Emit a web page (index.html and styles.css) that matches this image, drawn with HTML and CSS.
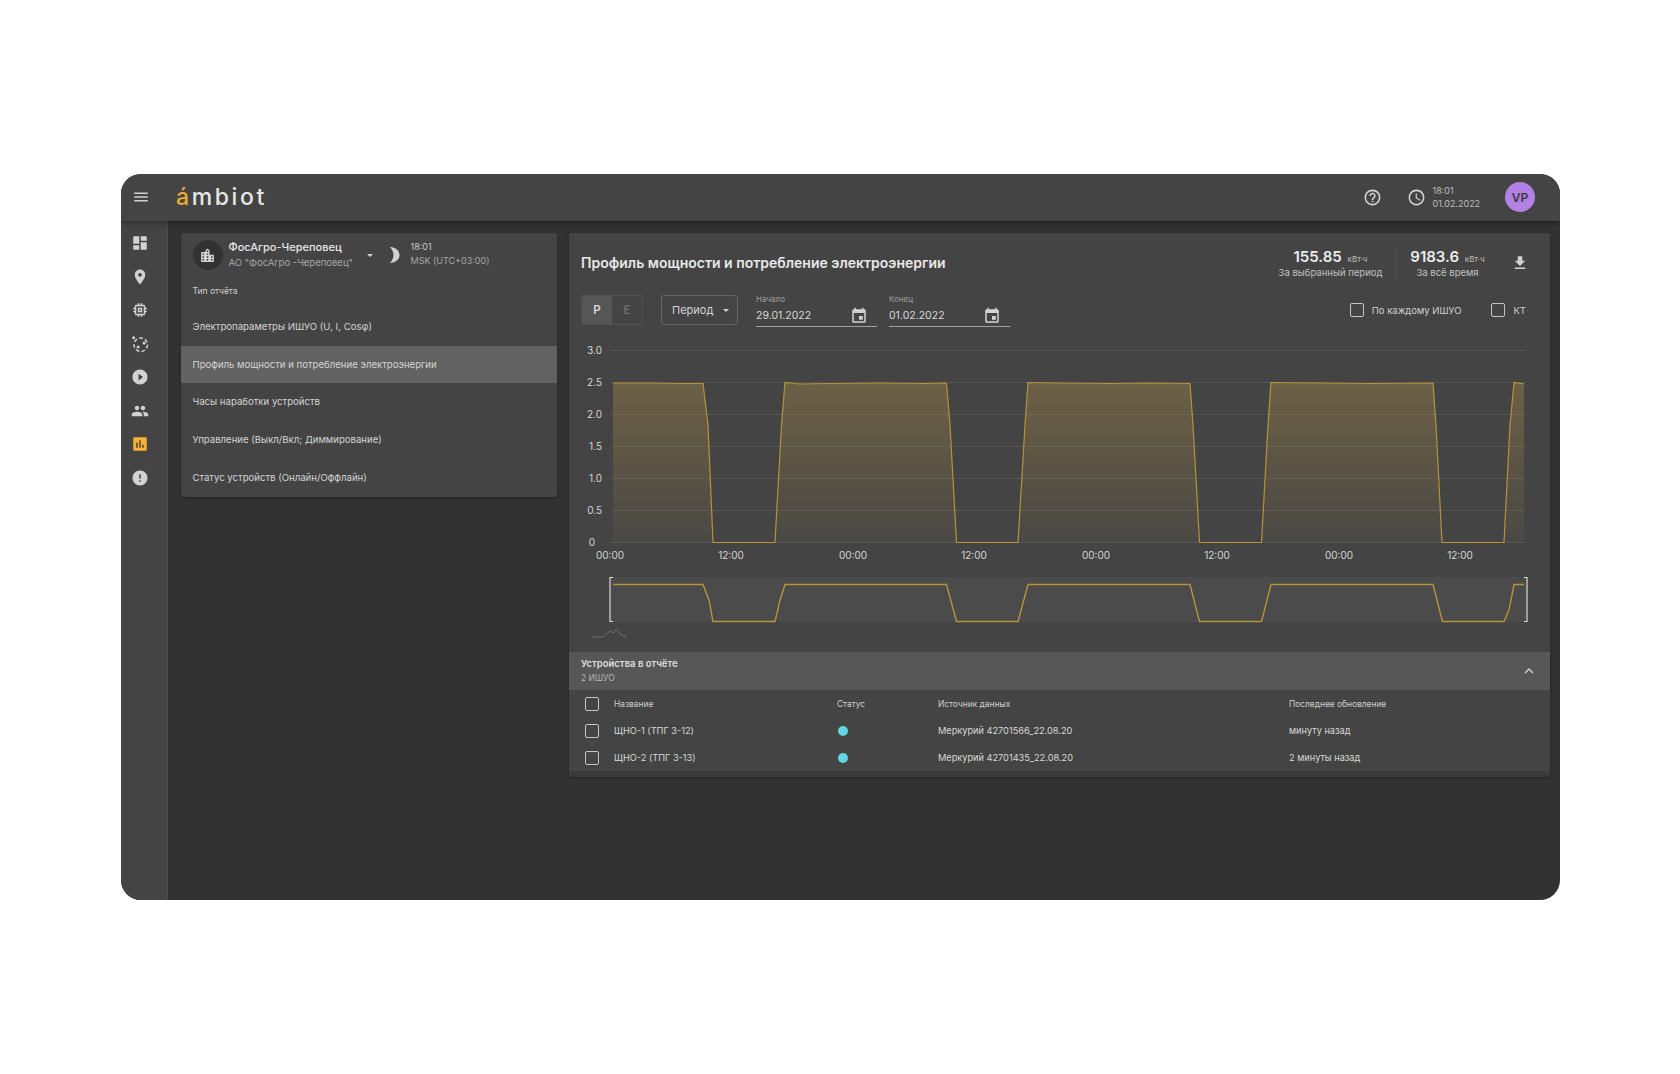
FILE: index.html
```html
<!DOCTYPE html>
<html lang="ru">
<head>
  <meta charset="UTF-8">
  <title>Ambiot</title>
  <link rel="stylesheet" href="styles.css">
</head>
<body>

<div class="window">
  <header class="topbar">
    <svg class="ic ic-menu" viewBox="0 0 24 24"><path d="M3 18h18v-2H3v2zm0-5h18v-2H3v2zm0-7v2h18V6H3z"/></svg>
    <div class="logo"><span class="logo-a">á</span>mbiot</div>
    <div class="topbar-right">
      <svg class="ic ic-help" viewBox="0 0 24 24"><path d="M11 18h2v-2h-2v2zm1-16C6.48 2 2 6.48 2 12s4.48 10 10 10 10-4.48 10-10S17.52 2 12 2zm0 18c-4.41 0-8-3.59-8-8s3.59-8 8-8 8 3.59 8 8-3.59 8-8 8zm0-14c-2.21 0-4 1.79-4 4h2c0-1.1.9-2 2-2s2 .9 2 2c0 2-3 1.75-3 5h2c0-2.25 3-2.5 3-5 0-2.21-1.79-4-4-4z"/></svg>
      <svg class="ic ic-clock" viewBox="0 0 24 24"><path d="M11.99 2C6.47 2 2 6.48 2 12s4.47 10 9.99 10C17.52 22 22 17.52 22 12S17.52 2 11.99 2zM12 20c-4.42 0-8-3.58-8-8s3.58-8 8-8 8 3.58 8 8-3.58 8-8 8zm.5-13H11v6l5.25 3.15.75-1.23-4.5-2.67z"/></svg>
      <div class="clock-text"><div>18:01</div><div>01.02.2022</div></div>
      <div class="avatar">VP</div>
    </div>
  </header>

  <div class="main">
    <nav class="sidebar">
      <svg class="ic nav-ic" viewBox="0 0 24 24"><path d="M3 13h8V3H3v10zm0 8h8v-6H3v6zm10 0h8V11h-8v10zm0-18v6h8V3h-8z"/></svg>
      <svg class="ic nav-ic" viewBox="0 0 24 24"><path d="M12 2C8.13 2 5 5.13 5 9c0 5.25 7 13 7 13s7-7.75 7-13c0-3.87-3.13-7-7-7zm0 9.5a2.5 2.5 0 0 1 0-5 2.5 2.5 0 0 1 0 5z"/></svg>
      <svg class="ic nav-ic" viewBox="0 0 24 24"><path d="M15 9H9v6h6V9zm-2 4h-2v-2h2v2zm8-2V9h-2V7c0-1.1-.9-2-2-2h-2V3h-2v2h-2V3H9v2H7c-1.1 0-2 .9-2 2v2H3v2h2v2H3v2h2v2c0 1.1.9 2 2 2h2v2h2v-2h2v2h2v-2h2c1.1 0 2-.9 2-2v-2h2v-2h-2v-2h2zm-4 6H7V7h10v10z"/></svg>
      <svg class="ic nav-ic" viewBox="0 0 24 24"><circle class="dashed" cx="13" cy="13" r="9"/><circle cx="3.5" cy="3.5" r="2"/><circle cx="17.5" cy="10.5" r="2"/><circle cx="9.5" cy="16" r="2"/></svg>
      <svg class="ic nav-ic" viewBox="0 0 24 24"><path d="M12 2C6.48 2 2 6.48 2 12s4.48 10 10 10 10-4.48 10-10S17.52 2 12 2zm-2 14.5v-9l6 4.5-6 4.5z"/></svg>
      <svg class="ic nav-ic" viewBox="0 0 24 24"><path d="M16 11c1.66 0 2.99-1.34 2.99-3S17.66 5 16 5c-1.66 0-3 1.34-3 3s1.34 3 3 3zm-8 0c1.66 0 2.99-1.34 2.99-3S9.66 5 8 5C6.34 5 5 6.34 5 8s1.34 3 3 3zm0 2c-2.33 0-7 1.17-7 3.5V19h14v-2.5c0-2.33-4.67-3.5-7-3.5zm8 0c-.29 0-.62.02-.97.05 1.16.84 1.97 1.97 1.97 3.45V19h6v-2.5c0-2.33-4.67-3.5-7-3.5z"/></svg>
      <svg class="ic nav-ic nav-active" viewBox="0 0 24 24"><path d="M19 3H5c-1.1 0-2 .9-2 2v14c0 1.1.9 2 2 2h14c1.1 0 2-.9 2-2V5c0-1.1-.9-2-2-2zM9 17H7v-7h2v7zm4 0h-2V7h2v10zm4 0h-2v-4h2v4z"/></svg>
      <svg class="ic nav-ic" viewBox="0 0 24 24"><path d="M12 2C6.48 2 2 6.48 2 12s4.48 10 10 10 10-4.48 10-10S17.52 2 12 2zm1 15h-2v-2h2v2zm0-4h-2V7h2v6z"/></svg>
    </nav>

    <div class="content">
      <section class="card reports">
        <div class="org">
          <div class="org-icon">
            <svg class="ic" viewBox="0 0 24 24"><path d="M15 11V5l-3-3-3 3v2H3v14h18V11h-6zm-8 8H5v-2h2v2zm0-4H5v-2h2v2zm0-4H5V9h2v2zm6 8h-2v-2h2v2zm0-4h-2v-2h2v2zm0-4h-2V9h2v2zm0-4h-2V5h2v2zm6 12h-2v-2h2v2zm0-4h-2v-2h2v2z"/></svg>
          </div>
          <div class="org-names">
            <div class="org-name">ФосАгро-Череповец</div>
            <div class="org-sub">АО "ФосАгро -Череповец"</div>
          </div>
          <span class="caret"></span>
          <svg class="ic ic-moon" viewBox="0 0 24 24"><path d="M5 1c8 1 13 5 13 11s-5 10-13 11c3-3 5-7 5-11S8 4 5 1z"/></svg>
          <div class="org-time">
            <div>18:01</div>
            <div class="org-zone">MSK (UTC+03:00)</div>
          </div>
        </div>
        <div class="reports-label">Тип отчёта</div>
        <ul class="report-list">
          <li>Электропараметры ИШУО (U, I, Cosφ)</li>
          <li class="selected">Профиль мощности и потребление электроэнергии</li>
          <li>Часы наработки устройств</li>
          <li>Управление (Выкл/Вкл; Диммирование)</li>
          <li>Статус устройств (Онлайн/Оффлайн)</li>
        </ul>
      </section>

      <section class="card report">
        <div class="report-head">
          <h2>Профиль мощности и потребление электроэнергии</h2>
          <div class="totals">
            <div class="total total-period">
              <div class="total-value">155.85 <small>кВт·ч</small></div>
              <div class="total-label">За выбранный период</div>
            </div>
            <div class="total total-all">
              <div class="total-value">9183.6 <small>кВт·ч</small></div>
              <div class="total-label">За всё время</div>
            </div>
            <svg class="ic ic-download" viewBox="0 0 24 24"><path d="M19 9h-4V3H9v6H5l7 7 7-7zM5 18v2h14v-2H5z"/></svg>
          </div>
        </div>

        <div class="controls">
          <div class="toggle"><span class="toggle-on">P</span><span class="toggle-off">E</span></div>
          <div class="select">Период <span class="caret"></span></div>
          <div class="date">
            <label>Начало</label>
            <div class="date-value">29.01.2022
              <svg class="ic" viewBox="0 0 24 24"><path d="M17 12h-5v5h5v-5zM16 1v2H8V1H6v2H5c-1.11 0-1.99.9-1.99 2L3 19c0 1.1.89 2 2 2h14c1.1 0 2-.9 2-2V5c0-1.1-.9-2-2-2h-1V1h-2zm3 18H5V8h14v11z"/></svg>
            </div>
          </div>
          <div class="date">
            <label>Конец</label>
            <div class="date-value">01.02.2022
              <svg class="ic" viewBox="0 0 24 24"><path d="M17 12h-5v5h5v-5zM16 1v2H8V1H6v2H5c-1.11 0-1.99.9-1.99 2L3 19c0 1.1.89 2 2 2h14c1.1 0 2-.9 2-2V5c0-1.1-.9-2-2-2h-1V1h-2zm3 18H5V8h14v11z"/></svg>
            </div>
          </div>
          <div class="checks">
            <span class="check-item check-each"><span class="box"></span>По каждому ИШУО</span>
            <span class="check-item"><span class="box"></span>КТ</span>
          </div>
        </div>

        <svg class="chart" viewBox="569 340 981 312">
          <defs>
            <linearGradient id="areaFill" x1="0" y1="0" x2="0" y2="1">
              <stop offset="0" stop-color="#c9a04a" stop-opacity="0.3"/>
              <stop offset="1" stop-color="#c9a04a" stop-opacity="0.05"/>
            </linearGradient>
          </defs>
          <g class="grid">
            <line x1="610" y1="350.5" x2="1526" y2="350.5"/>
            <line x1="610" y1="382.5" x2="1526" y2="382.5"/>
            <line x1="610" y1="414.5" x2="1526" y2="414.5"/>
            <line x1="610" y1="446.5" x2="1526" y2="446.5"/>
            <line x1="610" y1="478.5" x2="1526" y2="478.5"/>
            <line x1="610" y1="510.5" x2="1526" y2="510.5"/>
            <line x1="610" y1="542.5" x2="1526" y2="542.5"/>
          </g>
          <g class="y-labels">
            <text x="602" y="353.5">3.0</text>
            <text x="602" y="385.5">2.5</text>
            <text x="602" y="417.5">2.0</text>
            <text x="602" y="449.5">1.5</text>
            <text x="602" y="481.5">1.0</text>
            <text x="602" y="513.5">0.5</text>
            <text x="595" y="545.5">0</text>
          </g>
          <g class="x-labels">
            <text x="610" y="559">00:00</text>
            <text x="731" y="559">12:00</text>
            <text x="853" y="559">00:00</text>
            <text x="974" y="559">12:00</text>
            <text x="1096" y="559">00:00</text>
            <text x="1217" y="559">12:00</text>
            <text x="1339" y="559">00:00</text>
            <text x="1460" y="559">12:00</text>
          </g>
          <path class="area" d="M613 383L650 383L680 383.5L703 383.5L708 425L713 542.5L775 542.5L781.5 425L785 382.5L800 384L830 383.5L880 383L925 383.5L946.5 383L950 425L956.5 542.5L1018 542.5L1025 425L1028 382.5L1060 383L1110 383.5L1150 383L1190 383.5L1193 425L1199.5 542.5L1261.5 542.5L1268 425L1271 382.5L1320 383L1370 383.5L1433 383L1436 425L1442 542.5L1504 542.5L1510 425L1514 382.5L1524 384L1524 542.5L613 542.5Z"/>
          <path class="line" d="M613 383L650 383L680 383.5L703 383.5L708 425L713 542.5L775 542.5L781.5 425L785 382.5L800 384L830 383.5L880 383L925 383.5L946.5 383L950 425L956.5 542.5L1018 542.5L1025 425L1028 382.5L1060 383L1110 383.5L1150 383L1190 383.5L1193 425L1199.5 542.5L1261.5 542.5L1268 425L1271 382.5L1320 383L1370 383.5L1433 383L1436 425L1442 542.5L1504 542.5L1510 425L1514 382.5L1524 384"/>
          <rect class="brush" x="610" y="577" width="917" height="45"/>
          <path class="line line-mini" d="M613 584.5L703 584.5L709 600L713 621.5L775 621.5L780 600L785 584.5L946.5 584.5L956.5 621.5L1018 621.5L1028 584.5L1190 584.5L1199.5 621.5L1261.5 621.5L1271 584.5L1433 584.5L1442.5 621.5L1504 621.5L1509 610L1514 584.5L1524 584.5"/>
          <path class="handle" d="M613 577.5H610V621.5H613"/>
          <path class="handle" d="M1524 577.5H1527V621.5H1524"/>
          <path class="spark" d="M593 637H603L610 631L613 633L616 629L621 635L626 637"/>
        </svg>

        <div class="devices-head">
          <div>
            <div class="devices-title">Устройства в отчёте</div>
            <div class="devices-sub">2 ИШУО</div>
          </div>
          <svg class="ic ic-collapse" viewBox="0 0 24 24"><path d="M12 8l-6 6 1.41 1.41L12 10.83l4.59 4.58L18 14z"/></svg>
        </div>
        <div class="devices">
          <div class="row row-head">
            <span class="box"></span><span>Название</span><span>Статус</span><span>Источник данных</span><span>Последнее обновление</span>
          </div>
          <div class="row">
            <span class="box"></span><span>ЩНО-1 (ТПГ 3-12)</span><span class="dot"></span><span>Меркурий 42701566_22.08.20</span><span>минуту назад</span>
          </div>
          <div class="row">
            <span class="box"></span><span>ЩНО-2 (ТПГ 3-13)</span><span class="dot"></span><span>Меркурий 42701435_22.08.20</span><span>2 минуты назад</span>
          </div>
        </div>
      </section>
    </div>
  </div>
</div>

</body>
</html>
```

FILE: styles.css
```css
* { box-sizing: border-box; font-family: Inter, "Noto Sans", sans-serif; }
body { background: white; margin: 0; padding: 174px 0 0 121px; }

.ic { display: block; fill: #d2d2d2; flex: none; }

.window {
  width: 1439px;
  height: 726px;
  background: #323232;
  border-radius: 20px;
  overflow: hidden;
  display: flex;
  flex-direction: column;
  color: #dcdcdc;
}

/* top bar */
.topbar {
  height: 47px;
  flex: none;
  background: #444;
  display: flex;
  align-items: center;
  padding: 0 25px 1px 11px;
  box-shadow: 0 2px 6px rgba(0, 0, 0, 0.35);
  position: relative;
}

.ic-menu { width: 18px; height: 18px; }

.logo {
  margin-left: 26px;
  font-size: 23px;
  font-weight: 500;
  letter-spacing: 2.6px;
  color: #e6e6e6;
}

.logo-a { color: #f0ad32; }

.topbar-right {
  margin-left: auto;
  display: flex;
  align-items: center;
}

.ic-help, .ic-clock { width: 19px; height: 19px; }
.ic-clock { margin-left: 25px; }

.clock-text {
  margin-left: 7px;
  width: 72.5px;
  font-size: 9px;
  line-height: 13px;
  color: #bdbdbd;
}

.avatar {
  width: 30px;
  height: 30px;
  border-radius: 50%;
  background: #b281e4;
  color: #3a3a3a;
  font-size: 12px;
  font-weight: 600;
  display: flex;
  align-items: center;
  justify-content: center;
}

/* sidebar */
.main { flex: 1; display: flex; min-height: 0; }

.sidebar {
  width: 47px;
  flex: none;
  background: #444;
  border-right: 1px solid #4d4d4d;
  display: flex;
  flex-direction: column;
  align-items: center;
  gap: 15.5px;
  padding: 13px 8px 0 0;
}

.nav-ic { width: 18px; height: 18px; }
.nav-active { fill: #f5b335; }
.dashed { fill: none; stroke: #d2d2d2; stroke-width: 2; stroke-dasharray: 5 3; }

/* content */
.content {
  flex: 1;
  display: flex;
  align-items: flex-start;
  gap: 12px;
  padding: 12px 10px 0 13px;
}

.card {
  background: #444;
  border-radius: 3px;
  box-shadow: 0 1px 3px rgba(0, 0, 0, 0.3);
}

.reports { width: 376px; height: 264px; overflow: hidden; }

.org {
  display: flex;
  align-items: center;
  padding: 7px 11.5px 0;
}

.org-icon {
  width: 30px;
  height: 30px;
  border-radius: 50%;
  background: #323232;
  display: flex;
  align-items: center;
  justify-content: center;
}

.org-icon .ic { width: 17px; height: 17px; }
.org-names { margin-left: 6px; width: 133px; }
.org-name { font-size: 11px; font-weight: 500; line-height: 15px; color: #e4e4e4; }
.org-sub { font-size: 9.5px; line-height: 15px; color: #a6a6a6; white-space: nowrap; }

.caret {
  display: inline-block;
  width: 0;
  height: 0;
  border-left: 3.5px solid transparent;
  border-right: 3.5px solid transparent;
  border-top: 3.5px solid #d2d2d2;
}

.org > .caret { margin-left: 5px; }
.ic-moon { width: 18px; height: 18px; margin-left: 13px; }
.org-time { margin: -2px 0 0 7px; font-size: 9px; line-height: 14px; color: #c8c8c8; }
.org-zone { color: #a6a6a6; }

.reports-label { font-size: 8.5px; padding: 16px 11.5px 0; height: 38px; color: #d0d0d0; }

.report-list { list-style: none; margin: 0; padding: 0; }

.report-list li {
  height: 37.6px;
  display: flex;
  align-items: center;
  padding: 0 11.5px;
  font-size: 9.6px;
  color: #d4d4d4;
}

.report-list .selected { background: #626262; }

/* report panel */
.report {
  width: 981px;
  height: 544px;
  display: flex;
  flex-direction: column;
  background: #3b3b3b;
  overflow: hidden;
}

.report-head {
  height: 62px;
  flex: none;
  background: #444;
  display: flex;
  justify-content: space-between;
  padding: 13px 0 0 12px;
}

.report-head h2 {
  margin: 0;
  padding-top: 8px;
  font-size: 14px;
  font-weight: 600;
  color: #e8e8e8;
}

.totals { display: flex; align-items: flex-start; }
.total { height: 33px; text-align: center; white-space: nowrap; }
.total-period { width: 122px; padding-right: 7px; }
.total-all { width: 102px; padding-left: 2px; border-left: 1px solid #505050; }
.total-value { font-size: 15px; font-weight: 600; line-height: 18px; margin-top: 2px; color: #ececec; }
.total-value small { font-size: 8px; font-weight: 400; color: #bdbdbd; margin-left: 2px; }
.total-label { font-size: 9.5px; line-height: 10px; color: #c0c0c0; }
.ic-download { width: 18px; height: 18px; margin: 8px 21px 0 14px; }

.controls {
  height: 45px;
  flex: none;
  background: #444;
  display: flex;
  padding: 0 24px 0 12px;
}

.toggle {
  display: flex;
  width: 62px;
  height: 30px;
  border: 1px solid #505050;
  border-radius: 3px;
  font-size: 11.5px;
  font-weight: 600;
  overflow: hidden;
}

.toggle span { flex: 1; display: flex; align-items: center; justify-content: center; }
.toggle-on { background: #565656; color: #d8d8d8; }
.toggle-off { color: #6e6e6e; }

.select {
  margin-left: 18px;
  width: 77px;
  height: 30px;
  border: 1px solid #656565;
  border-radius: 3px;
  display: flex;
  align-items: center;
  gap: 10px;
  padding-left: 10px;
  font-size: 11px;
  color: #d4d4d4;
}

.date { margin-left: 18px; width: 121px; height: 32px; border-bottom: 1px solid #a0a0a0; }
.date + .date { margin-left: 12px; }
.date label { display: block; font-size: 8px; line-height: 8px; color: #9e9e9e; }

.date-value {
  display: flex;
  justify-content: space-between;
  padding: 4px 9px 0 0;
  font-size: 10.5px;
  line-height: 18px;
  color: #d8d8d8;
}

.date-value .ic { width: 18px; height: 18px; }

.checks { margin-left: auto; height: 30px; display: flex; align-items: center; }

.check-item {
  display: flex;
  align-items: center;
  gap: 8px;
  font-size: 9.5px;
  color: #d0d0d0;
}

.check-each { margin-right: 30px; }

.box {
  display: block;
  width: 14px;
  height: 14px;
  border: 1.5px solid #c4c4c4;
  border-radius: 2px;
}

/* chart */
.chart { display: block; flex: none; width: 981px; height: 312px; background: #444; }
.grid line { stroke: #545454; stroke-width: 1; }
.y-labels text { font-size: 10px; fill: #d4d4d4; text-anchor: end; }
.x-labels text { font-size: 10px; fill: #d4d4d4; text-anchor: middle; }
.area { fill: url(#areaFill); stroke: none; }
.line { fill: none; stroke: #b59339; stroke-width: 1.2; }
.line-mini { stroke-width: 1.4; }
.brush { fill: #4b4b4b; }
.handle { fill: none; stroke: #d8d8d8; stroke-width: 1.2; }
.spark { fill: none; stroke: #6e6e6e; stroke-width: 1; }

/* devices */
.devices-head {
  height: 38px;
  flex: none;
  background: #575757;
  display: flex;
  align-items: center;
  justify-content: space-between;
  padding: 0 12px;
}

.devices-title { font-size: 9.5px; font-weight: 600; line-height: 14px; color: #dedede; }
.devices-sub { font-size: 8.5px; line-height: 14px; color: #b4b4b4; }
.ic-collapse { width: 18px; height: 18px; }

.devices { background: #444; }

.row {
  height: 27px;
  display: grid;
  grid-template-columns: 29px 223px 101px 351px 1fr;
  align-items: center;
  padding-left: 16px;
  font-size: 9.2px;
  color: #d8d8d8;
}

.row-head { font-size: 8.4px; color: #cfcfcf; }

.dot {
  width: 10px;
  height: 10px;
  border-radius: 50%;
  background: #62d6e4;
  margin-left: 1px;
}
```
